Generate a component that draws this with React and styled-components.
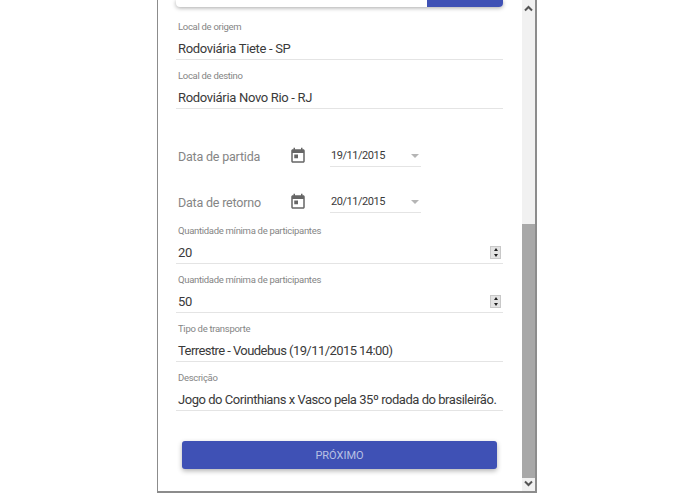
import React from "react";
import styled, { createGlobalStyle } from "styled-components";

const Global = createGlobalStyle`
  html, body { margin: 0; padding: 0; background: #fff; overflow: hidden; }
  body { font-family: Roboto, "Liberation Sans", sans-serif; }
`;
const Frame = styled.div`
  margin-left: 157px;
  width: 380px;
  height: 493px;
  box-sizing: border-box;
  border: solid #8c8c8c;
  border-width: 0 2px 2px 1px;
  display: flex;
  overflow: hidden;
`;
const Content = styled.main`
  flex: 1;
  min-width: 0;
  display: flex;
  flex-direction: column;
  padding: 0 19px 0 18px;
`;
const SearchBar = styled.div`
  height: 7px;
  display: flex;
  justify-content: flex-end;
  border-radius: 0 0 4px 4px;
  box-shadow: 0 1px 4px rgba(0,0,0,.35);
  margin-bottom: 12px;
  flex: none;
`;
const SearchAction = styled.div`
  width: 76px;
  background: #3f51b5;
  border-radius: 0 0 4px 0;
`;
const Field = styled.div`
  height: 41px;
  box-sizing: border-box;
  border-bottom: 1px solid #e4e4e4;
  margin-bottom: ${p => p.$gap ?? 8}px;
  padding: 1px 0 0 2px;
  position: relative;
  flex: none;
`;
const Label = styled.div`
  font-size: 9.5px;
  letter-spacing: -0.3px;
  line-height: 14px;
  color: #858585;
`;
const Value = styled.div`
  font-size: 13px;
  letter-spacing: ${p => p.$tracking ?? -0.32}px;
  line-height: 20px;
  margin-top: 5px;
  color: #3a3a3a;
  white-space: nowrap;
`;
const DateRow = styled.div`
  display: flex;
  align-items: center;
  height: 24px;
  padding-left: 2px;
  margin-bottom: ${p => p.$gap}px;
  flex: none;
`;
const DateLabel = styled.div`
  width: 111px;
  font-size: 12.5px;
  letter-spacing: -0.2px;
  color: #858585;
  flex: none;
`;
const IconSlot = styled.div`
  width: 41px;
  display: flex;
  flex: none;
`;
const Select = styled.div`
  width: 91px;
  height: 22px;
  box-sizing: border-box;
  border-bottom: 1px solid #e4e4e4;
  display: flex;
  align-items: center;
  justify-content: space-between;
  padding: 0 2px 0 1px;
  font-size: 11px;
  letter-spacing: -0.45px;
  color: #3a3a3a;
`;
const Caret = styled.span`
  width: 0;
  height: 0;
  border: 4px solid transparent;
  border-top: 4px solid #b5b5b5;
  border-bottom: 0;
`;
const Spinner = styled.div`
  position: absolute;
  right: 2px;
  top: 23px;
  width: 11px;
  height: 13px;
  background: #e3e3e3;
  border: 1px solid #c8c8c8;
  box-sizing: border-box;
  display: flex;
  flex-direction: column;
  align-items: center;
  justify-content: space-between;
  padding: 1px 0;
`;
const Up = styled.span`
  width: 0; height: 0;
  border: 2.5px solid transparent;
  border-bottom: 3px solid #222;
  border-top: 0;
`;
const Down = styled.span`
  width: 0; height: 0;
  border: 2.5px solid transparent;
  border-top: 3px solid #222;
  border-bottom: 0;
`;
const NextButton = styled.button`
  align-self: center;
  width: 315px;
  height: 28px;
  margin-top: 22px;
  flex: none;
  border: 0;
  border-radius: 3px;
  background: #3f51b5;
  color: #b9c1e4;
  font: 400 11px Roboto, sans-serif;
  box-shadow: 0 2px 5px rgba(0,0,0,.3);
`;
const Scrollbar = styled.aside`
  width: 13px;
  flex: none;
  background: #f1f1f1;
  display: flex;
  flex-direction: column;
`;
const ArrowBox = styled.div`
  height: 16px;
  display: flex;
  align-items: center;
  justify-content: center;
  flex: none;
`;
const TrackSpace = styled.div`
  flex: 1;
  display: flex;
  flex-direction: column;
  justify-content: flex-end;
`;
const Thumb = styled.div`
  height: 254px;
  margin-bottom: -3px;
  background: #a8a8a8;
`;

const Calendar = () => (
  <svg width="18" height="18" viewBox="0 0 24 24" fill="#666">
    <path d="M19 3h-1V1h-2v2H8V1H6v2H5c-1.1 0-2 .9-2 2v14c0 1.1.9 2 2 2h14c1.1 0 2-.9 2-2V5c0-1.100-.9-2-2-2zm0 16H5V8h14v11zM7 10h5v5H7z" />
  </svg>
);
const Chevron = ({ up }) => (
  <svg width="9" height="7" viewBox="0 0 9 7">
    <path d={up ? "M1 5.500L4.500 2 8 5.500" : "M1 1.500L4.500 5 8 1.500"} fill="none" stroke="#555" strokeWidth="2" />
  </svg>
);

const TextField = ({ label, value, spin, gap, tracking }) => (
  <Field $gap={gap}>
    <Label>{label}</Label>
    <Value $tracking={tracking}>{value}</Value>
    {spin && <Spinner><Up /><Down /></Spinner>}
  </Field>
);
const DateField = ({ label, value, gap }) => (
  <DateRow $gap={gap}>
    <DateLabel>{label}</DateLabel>
    <IconSlot><Calendar /></IconSlot>
    <Select>{value}<Caret /></Select>
  </DateRow>
);

export default function App() {
  return (
    <>
      <Global />
      <Frame>
        <Content>
          <SearchBar><SearchAction /></SearchBar>
          <TextField label="Local de origem" value="Rodoviária Tiete - SP" />
          <TextField label="Local de destino" value="Rodoviária Novo Rio - RJ" gap={35} />
          <DateField label="Data de partida" value="19/11/2015" gap={22} />
          <DateField label="Data de retorno" value="20/11/2015" gap={9} />
          <TextField label="Quantidade mínima de participantes" value="20" spin />
          <TextField label="Quantidade mínima de participantes" value="50" spin />
          <TextField label="Tipo de transporte" value="Terrestre - Voudebus (19/11/2015 14:00)" tracking={-0.57} />
          <TextField label="Descrição" value="Jogo do Corinthians x Vasco pela 35º rodada do brasileirão." tracking={-0.46} />
          <NextButton>PRÓXIMO</NextButton>
        </Content>
        <Scrollbar>
          <ArrowBox><Chevron up /></ArrowBox>
          <TrackSpace><Thumb /></TrackSpace>
          <ArrowBox><Chevron /></ArrowBox>
        </Scrollbar>
      </Frame>
    </>
  );
}
